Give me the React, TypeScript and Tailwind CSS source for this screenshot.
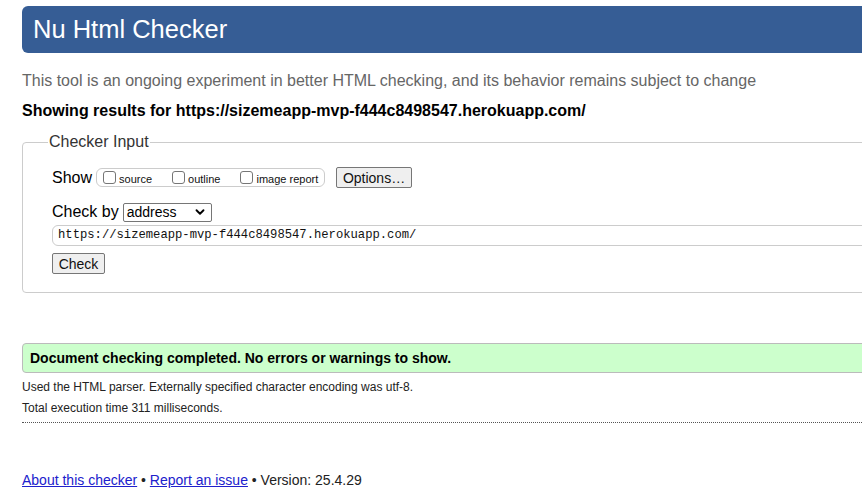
import { ChevronDown } from "lucide-react";

const sans = "font-['Liberation_Sans',Arial,sans-serif]";

function Box({ label }: { label: string }) {
  return (
    <label className="flex items-center gap-[3px]">
      <span className="inline-block h-[13px] w-[13px] rounded-[3px] border border-[#767676] bg-white" />
      <span className="mt-[3px] text-[11px] leading-none text-[#111]">{label}</span>
    </label>
  );
}

export default function App() {
  return (
    <div className={`${sans} h-[498px] w-[862px] overflow-hidden bg-white text-black`}>
      <div className="w-[900px] pl-[22px]">
        <header className="mt-[6px] flex h-[47px] items-center rounded-l-[6px] bg-[#365d95] pl-[11px]">
          <h1 className="text-[25.5px] leading-none text-white">Nu Html Checker</h1>
        </header>

        <p className="mt-[18px] text-[16px] leading-[20px] text-[#666]">
          This tool is an ongoing experiment in better HTML checking, and its behavior remains subject to change
        </p>
        <p className="mt-[10px] text-[16px] font-bold leading-[20px]">
          Showing results for https://sizemeapp-mvp-f444c8498547.herokuapp.com/
        </p>

        <fieldset className="mt-[11px] h-[161px] rounded-l-[4px] border border-[#ccc] pl-[29px] pt-[15px]">
          <legend className="ml-[-4px] px-[1px] text-[16px] leading-[20px] text-[#333]">Checker Input</legend>

          <div className="flex items-center">
            <span className="text-[16px] leading-[20px]">Show</span>
            <div className="ml-[4px] flex h-[19px] w-[229px] items-center gap-[20px] rounded-[6px] border border-[#ccc] pl-[6px]">
              <Box label="source" />
              <Box label="outline" />
              <Box label="image report" />
            </div>
            <button className="ml-[11px] h-[21px] w-[76px] rounded-[2px] border border-[#767676] bg-[#efefef] text-[14px] leading-none text-[#111]">
              Options…
            </button>
          </div>

          <div className="mt-[14px] flex items-center">
            <span className="text-[16px] leading-[20px]">Check by</span>
            <div className="ml-[4px] flex h-[19px] w-[89px] items-center justify-between rounded-[2px] border border-[#767676] bg-white pl-[3px] pr-[4px]">
              <span className="text-[14px] leading-none">address</span>
              <ChevronDown size={14} strokeWidth={3.2} />
            </div>
          </div>

          <div className="mt-[3px] flex h-[21px] items-center rounded-l-[6px] border border-[#ccc] pl-[5px]">
            <span className="font-['Liberation_Mono',monospace] text-[12.2px] leading-none text-[#111]">
              https://sizemeapp-mvp-f444c8498547.herokuapp.com/
            </span>
          </div>

          <button className="mt-[7px] h-[21px] w-[53px] rounded-[2px] border border-[#767676] bg-[#efefef] text-[14px] leading-none text-[#111]">
            Check
          </button>
        </fieldset>

        <div className="mt-[50px] flex h-[30px] items-center rounded-l-[4px] border border-[#bbb] bg-[#ccffcc] pl-[7px]">
          <span className="text-[14px] font-bold">Document checking completed. No errors or warnings to show.</span>
        </div>

        <p className="mt-[6px] text-[12px] leading-[16px] text-[#222]">
          Used the HTML parser. Externally specified character encoding was utf-8.
        </p>
        <p className="mt-[5px] text-[12px] leading-[16px] text-[#222]">Total execution time 311 milliseconds.</p>
        <div className="mt-[6px] w-full border-b border-dotted border-[#555]" />

        <p className="mt-[48px] text-[14px] leading-[18px] text-[#222]">
          <a className="text-[#2020cc] underline" href="#">About this checker</a>
          {" • "}
          <a className="text-[#2020cc] underline" href="#">Report an issue</a>
          {" • Version: 25.4.29"}
        </p>
      </div>
    </div>
  );
}
